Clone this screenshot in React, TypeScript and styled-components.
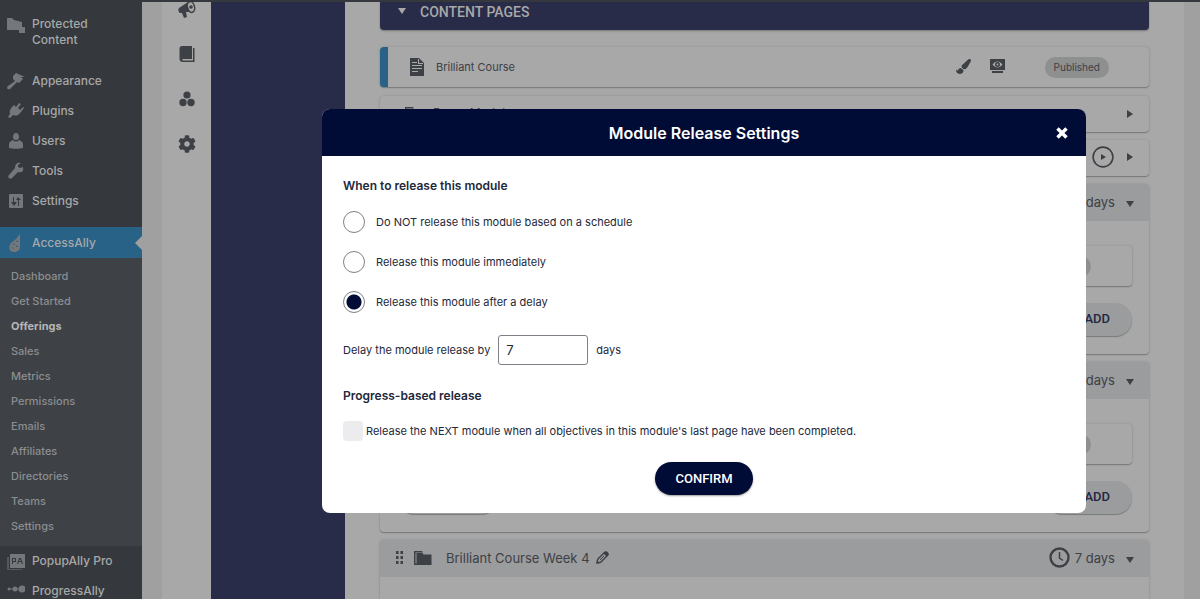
import React from 'react';
import styled, { createGlobalStyle, css } from 'styled-components';
import { FaCog, FaPaintBrush } from 'react-icons/fa';

const ui = '"Inter", "Liberation Sans", sans-serif';
const roboto = '"Roboto", "Liberation Sans", sans-serif';

const color = {
  menu: '#35383c',
  submenu: '#3e4145',
  menuText: '#a7a8a9',
  submenuText: '#8b8e91',
  menuIcon: '#75787b',
  active: '#286286',
  strip: '#a0a0a0',
  page: '#a8a8a8',
  panel: '#292c48',
  ink: '#3d4045',
  header: '#9b9c9d',
  pill: '#8e9090',
  brand: '#000b36',
};

const GlobalStyle = createGlobalStyle`
  * { box-sizing: border-box; }
  body { margin: 0; font-family: ${ui}; background: ${color.page}; }
  h1, h2, h3, p, ul { margin: 0; padding: 0; }
  ul { list-style: none; }
  button { font: inherit; cursor: pointer; }
  a { color: inherit; text-decoration: none; }
`;

const Screen = styled.div`
  display: flex;
  height: 100vh;
  overflow: hidden;
  border-top: 2px solid ${color.menu};
`;

/* Admin menu */
const Menu = styled.nav`
  flex: none;
  width: 142px;
  padding-top: 14px;
  background: ${color.menu};
  color: ${color.menuText};
`;

const MenuLink = styled.a<{ $active?: boolean; $tall?: boolean }>`
  display: flex;
  align-items: center;
  height: 30px;
  padding-left: 7px;
  font-size: 12px;
  line-height: 16px;
  font-weight: 500;
  ${(p) =>
    p.$tall &&
    css`
      height: 32px;
      margin-bottom: 18px;
      padding-right: 30px;
      align-items: flex-start;
    `}
  ${(p) =>
    p.$active &&
    css`
      height: 31px;
      margin-top: 11px;
      background: ${color.active};
      &::after {
        content: '';
        margin-left: auto;
        border: 7px solid transparent;
        border-left: 0;
        border-right-color: ${color.strip};
      }
    `}
`;

const MenuIcon = styled.svg`
  flex: none;
  width: 18px;
  height: 18px;
  margin-right: 7px;
  fill: ${color.menuIcon};
`;

const Submenu = styled.ul`
  padding: 6px 0 7px;
  background: ${color.submenu};
  color: ${color.submenuText};
  font-size: 11px;
  line-height: 25px;
`;

const SubmenuLink = styled.a<{ $current?: boolean }>`
  display: block;
  padding-left: 11px;
  font-weight: ${(p) => (p.$current ? 700 : 500)};
  color: ${(p) => (p.$current ? '#b4b5b6' : 'inherit')};
`;

/* Tool rail */
const Rail = styled.div`
  flex: none;
  display: flex;
  flex-direction: column;
  align-items: center;
  gap: 25px;
  width: 69px;
  margin-top: -3px;
  padding-left: 20px;
  background: linear-gradient(to right, ${color.strip} 20px, ${color.page} 20px);
`;

const RailButton = styled.button`
  display: block;
  width: 20px;
  height: 20px;
  padding: 1px;
  border: 0;
  background: none;
  color: ${color.ink};
  svg { display: block; width: 18px; height: 18px; }
`;

const SidePanel = styled.div`
  flex: none;
  width: 134px;
  background: ${color.panel};
`;

/* Course content */
const Content = styled.main`
  flex: 1;
  min-width: 0;
  padding: 0 35px;
  border-right: 16px solid ${color.strip};
  background: ${color.page};
  color: ${color.ink};
`;

const SectionBar = styled.div`
  display: flex;
  align-items: flex-start;
  gap: 14px;
  height: 28px;
  margin-bottom: 17px;
  padding-left: 18px;
  border-radius: 0 0 4px 4px;
  background: ${color.panel};
  box-shadow: 0 1px 2px rgba(0, 0, 0, 0.3);
  color: #a8a8a8;
  h2 { font: 500 14px/20px ${roboto}; }
  svg { margin-top: 6px; }
`;

const raised = css`
  border-radius: 4px;
  background: ${color.page};
  box-shadow: 0 1px 1px #777a7c, 0 0 3px rgba(0, 0, 0, 0.15);
`;

const CardTitle = styled.span`
  flex: 1;
  margin-left: 10px;
`;

const Card = styled.div<{ $lead?: boolean }>`
  ${raised}
  display: flex;
  align-items: center;
  height: ${(p) => (p.$lead ? 40 : 36)}px;
  margin-bottom: ${(p) => (p.$lead ? 9 : 8)}px;
  padding-right: ${(p) => (p.$lead ? 40 : 15)}px;
  padding-left: ${(p) => (p.$lead ? 20 : 25)}px;
  border-left: ${(p) => (p.$lead ? `8px solid ${color.active}` : '0')};
  font-size: ${(p) => (p.$lead ? 11 : 12)}px;
  ${CardTitle} { padding-bottom: ${(p) => (p.$lead ? 0 : 4)}px; }
`;

const CardActions = styled.div`
  display: flex;
  align-items: center;
  gap: 19px;
  margin-right: 40px;
  padding-bottom: 2px;
`;

const IconButton = styled.button`
  display: block;
  padding: 0;
  border: 0;
  background: none;
  color: inherit;
  svg { display: block; }
`;

const Pill = styled.span`
  padding: 0 9px;
  border-radius: 11px;
  background: ${color.pill};
  font-size: 10px;
  line-height: 21px;
`;

const ModuleCard = styled.section`
  ${raised}
  min-height: 170px;
  margin-bottom: 8px;
`;

const ModuleHeader = styled.header`
  display: flex;
  align-items: center;
  height: 37px;
  padding: 0 15px 2px 16px;
  border-radius: 4px 4px 0 0;
  background: ${color.header};
  h3 { margin: 0 6px 0 14px; font-size: 13px; font-weight: 400; }
  svg { flex: none; }
`;

const DragHandle = styled.span`
  margin-right: 11px;
  cursor: grab;
  svg { display: block; }
`;

const Release = styled.div`
  display: flex;
  align-items: center;
  gap: 5px;
  margin-left: auto;
  font-size: 13px;
`;

const Toggle = styled(IconButton)`
  margin: 4px 0 0 6px;
`;

const PlayRelease = styled(Release)`
  gap: 12px;
  padding-bottom: 2px;
`;

const ModuleBody = styled.div`
  display: flex;
  flex-direction: column;
  gap: 17px;
  padding: 25px 17px 0 18px;
`;

const PageRow = styled.div`
  ${raised}
  display: flex;
  align-items: center;
  justify-content: space-between;
  height: 40px;
  padding: 0 41px 0 20px;
`;

const ButtonRow = styled.div`
  display: flex;
  justify-content: space-between;
`;

const SoftButton = styled.button`
  display: flex;
  gap: 9px;
  height: 33px;
  padding: 0 22px;
  border: 0;
  border-radius: 17px;
  background: ${color.header};
  box-shadow: 0 1px 1px #777a7c;
  color: #24273f;
  font: 500 13px/31px ${roboto};
`;

/* Dialog */
const Overlay = styled.div`
  position: fixed;
  inset: 0;
  padding: 109px 114px 0 322px;
`;

const Dialog = styled.section`
  border-radius: 8px;
  overflow: hidden;
  background: #fff;
  color: #23283a;
  font-size: 11px;
`;

const DialogHeader = styled.header`
  display: grid;
  grid-template-columns: 1fr auto 1fr;
  align-items: center;
  height: 47px;
  padding: 0 18px;
  background: ${color.brand};
  color: #fff;
  h1 { grid-column: 2; font-size: 16px; font-weight: 600; line-height: 20px; }
`;

const CloseButton = styled(IconButton)`
  justify-self: end;
`;

const DialogForm = styled.form`
  display: flex;
  flex-direction: column;
  align-items: flex-start;
  padding: 20px 21px 18px;
`;

const GroupTitle = styled.h2`
  font-size: 12px;
  font-weight: 600;
  line-height: 20px;
`;

const Options = styled.div`
  display: flex;
  flex-direction: column;
  gap: 18px;
  margin: 15px 0 22px;
`;

const Option = styled.label`
  display: flex;
  align-items: center;
  gap: 11px;
  line-height: 22px;
`;

const Radio = styled.input`
  appearance: none;
  width: 22px;
  height: 22px;
  margin: 0;
  border: 1px solid #7d8087;
  border-radius: 50%;
  background: #fff;
  &:checked { background: radial-gradient(circle, ${color.brand} 7px, #fff 8px); }
`;

const DelayRow = styled.div`
  display: flex;
  align-items: center;
  gap: 8px;
  margin-bottom: 21px;
`;

const DaysInput = styled.input`
  width: 90px;
  height: 30px;
  padding: 0 7px;
  border: 1px solid #7d8087;
  border-radius: 3px;
  background: #fff;
  color: #23283a;
  font: 13px ${ui};
`;

const CheckOption = styled.label`
  display: flex;
  align-items: center;
  gap: 3px;
  margin: 15px 0 21px;
  line-height: 20px;
`;

const Checkbox = styled.input`
  appearance: none;
  width: 20px;
  height: 20px;
  margin: 0;
  border-radius: 4px;
  background: #ececee;
  &:checked { background: ${color.brand}; }
`;

const ConfirmButton = styled.button`
  align-self: center;
  height: 33px;
  padding: 0 20px;
  border: 0;
  border-radius: 17px;
  background: ${color.brand};
  box-shadow: 0 1px 2px rgba(0, 0, 0, 0.4);
  color: #fff;
  font: 500 13px/31px ${roboto};
`;

const menuIcons: Record<string, React.ReactNode> = {
  protected: (
    <>
      <path d="M0 2h5l2 2 8 2v8H0z" />
      <path d="M12 11h6v6h-6z" />
    </>
  ),
  appearance: <path d="M6 4l3-3 9 4-4 0 2 2-4 4-2-1-7 7c-2 1-4-1-2-3l7-5-2-2z" />,
  plugins: <path d="M9 5l3-4 2 1-3 4 2 2 3-3 1 1-3 4-1 1c-2 3-5 3-7 2l-3 3-2-1 2-3C2 10 3 7 5 5l2-2z" />,
  users: <path d="M9 1c2 0 3 2 3 4S11 8 9 8 6 7 6 5s1-4 3-4zM2 16v-4c0-2 2-3 4-4 2 2 4 2 6 0 2 1 4 2 4 4v4c-4 1-10 1-14 0z" />,
  tools: <path d="M16 5l-3 1-2-1 0-2 3-2c-4-1-6 1-6 5L2 13c-2 2 1 5 3 3l6-6c4 1 6-1 5-5z" />,
  settings: <path fillRule="evenodd" d="M3 2h12q1 0 1 1v12q0 1-1 1H3q-1 0-1-1V3q0-1 1-1zM6 5v5H4l3 4 3-4H7V5zm5 0L9 8h2v6h1V8h2z" />,
  access: <path fillRule="evenodd" d="M13 0v13c0 3-3 5-6 5-5 0-6-5-3-9l5-4zM11 6L9 8h2zM7 9L6 11h2zM10 11l-1 2h2zM6 13l-1 1 2 1z" />,
  popup: (
    <>
      <path d="M0 5h2v12h13v1H0z" opacity=".5" />
      <path fillRule="evenodd" d="M3 2h15v14H3zM5 6v6h1v-2h3V6zm1 1h2v2H6zM10 12h1l1-2h2l1 2h1l-2-6h-2zM12 9l1-2 1 2z" />
    </>
  ),
  progress: (
    <>
      <circle cx="2" cy="7" r="1.5" />
      <path d="M2 6.500h13v1H2z" />
      <circle cx="8" cy="7" r="2.500" />
      <circle cx="15" cy="7" r="3.500" />
    </>
  ),
};

const pages = [
  ['appearance', 'Appearance'],
  ['plugins', 'Plugins'],
  ['users', 'Users'],
  ['tools', 'Tools'],
  ['settings', 'Settings'],
];

const submenu = ['Dashboard', 'Get Started', 'Offerings', 'Sales', 'Metrics', 'Permissions', 'Emails', 'Affiliates', 'Directories', 'Teams', 'Settings'];

const Glyph = ({ name }: { name: string }) => (
  <MenuIcon viewBox="0 0 18 18" aria-hidden="true">{menuIcons[name]}</MenuIcon>
);

const ArrowDown = () => (
  <svg width="8" height="6" viewBox="0 0 8 6" fill="currentColor" aria-hidden="true"><path d="M0 0h8L4 6z" /></svg>
);

const ArrowRight = () => (
  <svg width="8" height="8" viewBox="0 0 8 8" fill="currentColor" aria-hidden="true"><path d="M1 0l6 4-6 4z" /></svg>
);

const FileIcon = () => (
  <svg width="18" height="18" viewBox="0 0 18 18" fill="currentColor" aria-hidden="true">
    <path fillRule="evenodd" d="M2 0h9l5 5v13H2zM10 1v5h5v-1h-4V1zM4 4v1h5V4zM4 7v1h10V7zM4 10v1h10v-1zM4 13v1h6v-1z" />
  </svg>
);

const FolderIcon = () => (
  <svg width="18" height="14" viewBox="0 0 18 14" fill="currentColor" aria-hidden="true">
    <path d="M0 0h8l1 1.500H1.500V14H0z" />
    <path d="M2.500 2h6l1 1.500h8V13h-15z" />
    <path d="M0 12.500h17.500V14H0z" />
  </svg>
);

const ClockIcon = () => (
  <svg width="21" height="21" viewBox="0 0 21 21" fill="none" stroke="currentColor" aria-hidden="true">
    <circle cx="10.500" cy="10.500" r="9" strokeWidth="2.400" />
    <path d="M10.500 5v6l3.500 2.500" strokeWidth="1.500" />
  </svg>
);

const PencilIcon = () => (
  <svg width="13" height="13" viewBox="0 0 13 13" aria-hidden="true">
    <path d="M1 12l.7-3.700 7-7q.8-.6 1.500 0l1.500 1.500q.6.700 0 1.500l-7 7z" fill="none" stroke="currentColor" strokeWidth="1.400" strokeLinejoin="round" />
    <path d="M7.500 2.500l2-2h1.500l1.500 1.500v1.500l-2 2zM0.500 12.500l.5-3 2.500 2.500z" fill="currentColor" />
    <path d="M4 9l4-4" stroke="currentColor" />
  </svg>
);

const PlayIcon = () => (
  <svg width="22" height="22" viewBox="0 0 22 22" fill="none" stroke="currentColor" aria-hidden="true">
    <circle cx="11" cy="11" r="9.900" strokeWidth="1.600" />
    <path d="M9 8l5 3-5 3z" fill="currentColor" stroke="none" />
  </svg>
);

const DragIcon = () => (
  <svg width="7" height="13" viewBox="0 0 7 13" fill="currentColor" aria-hidden="true">
    <path d="M0 0h2.500v3H0zM4.500 0H7v3H4.500zM0 5h2.500v3H0zM4.500 5H7v3H4.500zM0 10h2.500v3H0zM4.500 10H7v3H4.500z" />
  </svg>
);

const PreviewIcon = () => (
  <svg width="15" height="14" viewBox="0 0 15 14" fill="currentColor" aria-hidden="true">
    <path fillRule="evenodd" d="M0 0h15v11H0zM2.500 5.500c3 4 7 4 10 0-3-4-7-4-10 0z" />
    <path fillRule="evenodd" d="M7.500 3a2.500 2.500 0 1 1 0 5 2.500 2.500 0 0 1 0-5zm0 1.500a1 1 0 1 0 0 2 1 1 0 0 0 0-2z" />
    <path d="M2 12h11v2H2z" />
  </svg>
);

const ModulePanel = ({ title, open = true }: { title: string; open?: boolean }) => (
  <ModuleCard>
    <ModuleHeader>
      <DragHandle><DragIcon /></DragHandle>
      <FolderIcon />
      <h3>{title}</h3>
      <IconButton aria-label={`Rename ${title}`}><PencilIcon /></IconButton>
      <Release>
        <ClockIcon />
        7 days
        <Toggle aria-label={`Toggle ${title}`}><ArrowDown /></Toggle>
      </Release>
    </ModuleHeader>
    {open && (
      <ModuleBody>
        <PageRow>
          <FileIcon />
          <Pill>Published</Pill>
        </PageRow>
        <ButtonRow>
          <SoftButton><span>+</span>PAGES</SoftButton>
          <SoftButton><span>+</span>ADD</SoftButton>
        </ButtonRow>
      </ModuleBody>
    )}
  </ModuleCard>
);

export default function App() {
  return (
    <>
      <GlobalStyle />
      <Screen>
        <Menu aria-label="Admin menu">
          <MenuLink href="#protected" $tall><Glyph name="protected" />Protected Content</MenuLink>
          {pages.map(([icon, label]) => (
            <MenuLink key={label} href={`#${icon}`}><Glyph name={icon} />{label}</MenuLink>
          ))}
          <MenuLink href="#accessally" $active><Glyph name="access" />AccessAlly</MenuLink>
          <Submenu>
            {submenu.map((label) => (
              <li key={label}>
                <SubmenuLink href={`#${label}`} $current={label === 'Offerings'}>{label}</SubmenuLink>
              </li>
            ))}
          </Submenu>
          <MenuLink href="#popupally"><Glyph name="popup" />PopupAlly Pro</MenuLink>
          <MenuLink href="#progressally"><Glyph name="progress" />ProgressAlly</MenuLink>
        </Menu>

        <Rail>
          <RailButton aria-label="Announcements">
            <svg viewBox="0 0 18 18" fill="currentColor">
              <path d="M1 8l9-6c-1 4 0 8 3 10H8l1 5-3 1-2-5H2C0 12 0 9 1 8z" />
              <ellipse cx="13" cy="7" rx="3.500" ry="5.500" transform="rotate(-15 13 7)" fill="none" stroke="currentColor" strokeWidth="1.500" />
              <circle cx="13" cy="7" r="1.800" />
            </svg>
          </RailButton>
          <RailButton aria-label="Courses">
            <svg viewBox="0 0 18 18" fill="currentColor">
              <path d="M4 1h10v13H4.500v1.500H15V3h1.500v14H5q-3.500 0-3.500-3.500V4q0-3 2.500-3z" />
            </svg>
          </RailButton>
          <RailButton aria-label="Groups">
            <svg viewBox="0 0 18 18" fill="currentColor">
              <circle cx="9" cy="5" r="3.600" /><circle cx="5" cy="12.500" r="3.700" /><circle cx="13" cy="12.500" r="3.700" />
            </svg>
          </RailButton>
          <RailButton aria-label="Settings"><FaCog /></RailButton>
        </Rail>
        <SidePanel />

        <Content>
          <SectionBar><ArrowDown /><h2>CONTENT PAGES</h2></SectionBar>
          <Card $lead>
            <FileIcon />
            <CardTitle>Brilliant Course</CardTitle>
            <CardActions>
              <IconButton aria-label="Design"><FaPaintBrush size={15} /></IconButton>
              <IconButton aria-label="Preview"><PreviewIcon /></IconButton>
            </CardActions>
            <Pill>Published</Pill>
          </Card>
          <Card>
            <FolderIcon />
            <CardTitle>Demo Module</CardTitle>
            <ArrowRight />
          </Card>
          <Card>
            <FolderIcon />
            <CardTitle>Welcome Module</CardTitle>
            <PlayRelease><PlayIcon /><ArrowRight /></PlayRelease>
          </Card>
          <ModulePanel title="Brilliant Course Week 2" />
          <ModulePanel title="Brilliant Course Week 3" />
          <ModulePanel title="Brilliant Course Week 4" open={false} />
        </Content>
      </Screen>

      <Overlay>
        <Dialog role="dialog" aria-modal="true" aria-labelledby="dialog-title">
          <DialogHeader>
            <h1 id="dialog-title">Module Release Settings</h1>
            <CloseButton aria-label="Close">
              <svg width="12" height="12" viewBox="0 0 12 12" stroke="currentColor" strokeWidth="3.500" aria-hidden="true">
                <path d="M1.500 1.500l9 9M10.500 1.500l-9 9" />
              </svg>
            </CloseButton>
          </DialogHeader>
          <DialogForm onSubmit={(e) => e.preventDefault()}>
            <GroupTitle>When to release this module</GroupTitle>
            <Options>
              <Option><Radio type="radio" name="release" />Do NOT release this module based on a schedule</Option>
              <Option><Radio type="radio" name="release" />Release this module immediately</Option>
              <Option><Radio type="radio" name="release" defaultChecked />Release this module after a delay</Option>
            </Options>
            <DelayRow>
              <label htmlFor="delay-days">Delay the module release by</label>
              <DaysInput id="delay-days" defaultValue="7" />
              <span>days</span>
            </DelayRow>
            <GroupTitle>Progress-based release</GroupTitle>
            <CheckOption>
              <Checkbox type="checkbox" />
              Release the NEXT module when all objectives in this module's last page have been completed.
            </CheckOption>
            <ConfirmButton type="submit">CONFIRM</ConfirmButton>
          </DialogForm>
        </Dialog>
      </Overlay>
    </>
  );
}
